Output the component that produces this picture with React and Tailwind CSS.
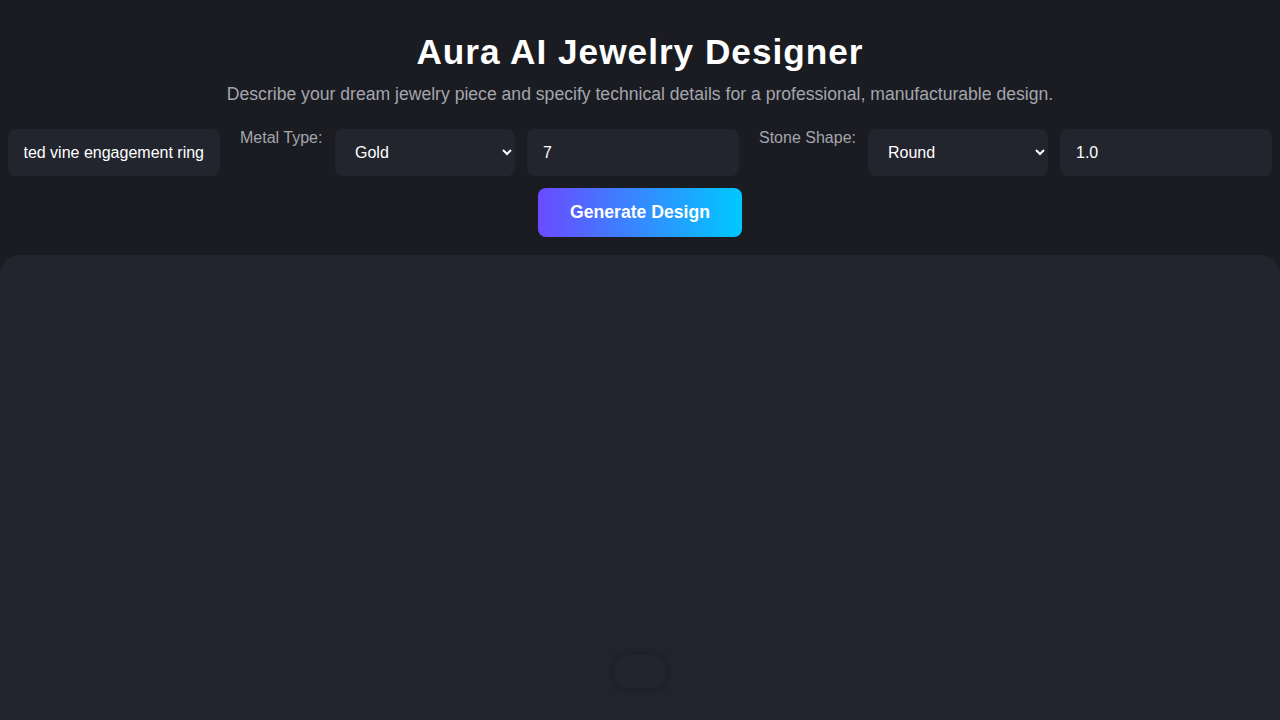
import React, { useState } from 'react'

export default function App() {
  const [prompt, setPrompt] = useState('A twisted vine engagement ring')
  const [metal, setMetal] = useState('Gold')
  const [size, setSize] = useState('7')
  const [shape, setShape] = useState('Round')
  const [carat, setCarat] = useState('1.0')

  const field = 'h-[47px] rounded-lg bg-[#22252e] text-white text-base px-4 outline-none border-none'

  return (
    <div className="min-h-screen bg-[#1b1c21] flex flex-col overflow-hidden"
      style={{ fontFamily: '"Liberation Sans", Arial, sans-serif' }}>
      <header className="pt-[31px] text-center">
        <h1 className="text-[35.2px] font-bold text-white tracking-[1px] leading-[42px]">Aura AI Jewelry Designer</h1>
        <p className="mt-[10px] text-[17.6px] text-[#a3a6ae] leading-[22px]">
          Describe your dream jewelry piece and specify technical details for a professional, manufacturable design.
        </p>
      </header>

      <div className="mt-[24px] flex items-start gap-3 px-2">
        <input type="text" value={prompt} onChange={e => setPrompt(e.target.value)}
          className={`${field} w-[212px]`} style={{ direction: 'rtl', textAlign: 'left' }} />
        <label className="ml-2 w-[83px] text-base text-[#a3a6ae] leading-[18px] whitespace-nowrap">Metal Type:</label>
        <select value={metal} onChange={e => setMetal(e.target.value)} className={`${field} w-[180px] pl-4 pr-2`}>
          <option>Gold</option>
          <option>Silver</option>
          <option>Platinum</option>
        </select>
        <input type="text" value={size} onChange={e => setSize(e.target.value)} className={`${field} w-[212px]`} />
        <label className="ml-2 w-[97px] text-base text-[#a3a6ae] leading-[18px] whitespace-nowrap">Stone Shape:</label>
        <select value={shape} onChange={e => setShape(e.target.value)} className={`${field} w-[180px] pl-4 pr-2`}>
          <option>Round</option>
          <option>Oval</option>
          <option>Princess</option>
        </select>
        <input type="text" value={carat} onChange={e => setCarat(e.target.value)} className={`${field} w-[212px]`} />
      </div>

      <div className="mt-3 flex justify-center">
        <button className="w-[204px] h-[49px] rounded-lg bg-linear-to-r/srgb from-[#6a4bff] to-[#00c8ff] text-white text-[17.6px] font-bold leading-[22px] pb-px">
          Generate Design
        </button>
      </div>

      <main className="mt-[18px] flex-1 rounded-t-[20px] bg-[#22252e] flex flex-col items-center justify-end pb-[32px]">
        <div className="w-[50px] h-[33px] rounded-xl bg-[#22252e] shadow-[0_0_12px_rgba(0,0,0,0.3)]" />
      </main>
    </div>
  )
}
